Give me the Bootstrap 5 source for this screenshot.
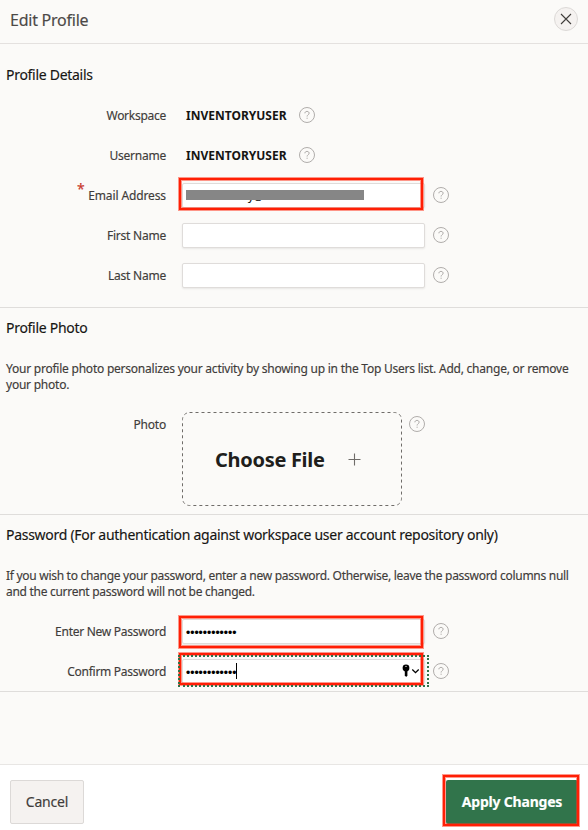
<!DOCTYPE html>
<html lang="en">
<head>
<meta charset="utf-8">
<meta name="viewport" content="width=device-width, initial-scale=1">
<title>Edit Profile</title>
<link href="https://cdn.jsdelivr.net/npm/bootstrap@5.3.0/dist/css/bootstrap.min.css" rel="stylesheet">
<style>
body{font-family:"Noto Sans","Open Sans",sans-serif;font-size:12px;line-height:16px;background:#fbfaf8;color:#3f3c3a;height:830px;overflow:hidden;-webkit-text-stroke:.15px}
.dialog-head{height:44px;padding:0 9px 5px 10px;border-bottom:1px solid #e4e1df}
.dialog-title{font-size:16px;line-height:20px;padding-top:1px;letter-spacing:-.24px;color:#4c4947;font-weight:400}
.close-btn{width:24px;height:24px;margin-right:1px;border:1px solid #dcd9d7;background:#f5f2f0;border-radius:50%;padding:0;line-height:0}
.section-box{border-bottom:1px solid #dfdddb}
.details-box{padding:11px 0 12px}
.section-title{font-size:14px;line-height:20px;color:#161513;padding:10px 6px 0;margin:0;font-weight:400;letter-spacing:-.285px}
.details-box .section-title{padding-bottom:10px}
.section-copy{padding:23px 6px 11px;margin:0;letter-spacing:-.23px;white-space:nowrap}
.section-copy.tight{letter-spacing:-.285px}
.field-row{height:40px}
.field-label{position:relative;width:166px;text-align:right;margin-right:16px;padding-top:2px;letter-spacing:-.22px}
.field-label.tight{letter-spacing:-.27px}
.field-label.loose{letter-spacing:-.12px}
.req-mark{color:#c8382a;font-size:14px;position:absolute;left:77px;top:-5px}
.field-value{font-weight:700;color:#161513;padding:2px 0 0 4px;margin-right:12px;-webkit-text-stroke:0}
.field-input{position:relative;width:243px;height:25px;margin-right:8px;background:#fff;border:1px solid #dfdcda;border-radius:2px;box-shadow:0 1px 2px rgba(0,0,0,.08);padding-left:3px;color:#000}
.callout-frame{position:absolute;border:2px solid #ff1f05;box-shadow:0 0 0 1px rgba(255,50,25,.5),inset 0 0 0 1px rgba(255,50,25,.5);pointer-events:none}
.frame-email{left:-4px;top:-6px;width:244px;height:32px}
.frame-new{left:-4px;top:-4px;width:244px;height:32px}
.frame-confirm{left:-4px;top:-7px;width:244px;height:32px}
.frame-apply{left:-3px;top:-5px;width:136px;height:51px}
.redaction{position:absolute;left:3px;top:6px;width:178px;height:10px;background:#868686}
.hidden-mail{position:absolute;left:65px;top:5px;font-size:11px;line-height:14px}
.dots{font-family:"Liberation Sans",sans-serif;font-size:12px;padding-top:4px}
.focus-dots{position:absolute;left:-5px;top:-5px;width:251px;height:32px;border:2px dotted #2f7248}
.caret{width:1px;height:16px;background:#000}
.autofill{margin-right:4px}
.drop-row{height:110px}
.drop-area{width:220px;height:94px;margin:8px 7px 0 0}
.drop-outline{position:absolute;inset:0}
.drop-label{margin-top:11px}
.drop-help{margin-top:12px}
.drop-text{font-size:20px;line-height:28px;font-weight:700;color:#201e1c;letter-spacing:-.3px;margin:2px 23px 0 33px;-webkit-text-stroke:0}
.dialog-foot{height:66px;border-top:1px solid #e8e6e4;background:#fff;padding:15px 10px 0}
.foot-btn{height:44px;font-size:14px;line-height:20px;border-radius:2px;padding:0}
.cancel-btn{width:74px;background:#f5f2f0;border:1px solid #dcd9d7;color:#3f3c3a;letter-spacing:-.2px}
.apply-btn{position:relative;width:132px;background:#31744b;color:#fff;font-weight:700;border:0;letter-spacing:-.2px}
</style>
</head>
<body class="d-flex flex-column">
<svg width="0" height="0" class="position-absolute">
  <symbol id="help" viewBox="0 0 16 16"><circle cx="8" cy="8" r="7.5" fill="none" stroke="#b0adab"/><path d="M5.9 6.3C5.9 5.2 6.7 4.4 8 4.4s2.1.8 2.1 1.9C10.1 7.7 8.1 7.8 8.1 9.5M8.1 10.7v1.1" fill="none" stroke="#aaa7a5"/></symbol>
</svg>
<header class="dialog-head d-flex align-items-center justify-content-between">
  <h1 class="dialog-title m-0">Edit Profile</h1>
  <button class="close-btn" aria-label="Close"><svg width="22" height="22" viewBox="0 0 22 22"><path d="M6 6l10 10M16 6L6 16" stroke="#403d3b" stroke-width="1.1" fill="none"/></svg></button>
</header>
<main class="flex-grow-1">
  <section class="section-box details-box">
    <h2 class="section-title">Profile Details</h2>
    <div class="field-row d-flex align-items-center">
      <div class="field-label tight">Workspace</div>
      <div class="field-value">INVENTORYUSER</div>
      <svg width="16" height="16"><use href="#help"/></svg>
    </div>
    <div class="field-row d-flex align-items-center">
      <div class="field-label">Username</div>
      <div class="field-value">INVENTORYUSER</div>
      <svg width="16" height="16"><use href="#help"/></svg>
    </div>
    <div class="field-row d-flex align-items-center">
      <div class="field-label loose"><span class="req-mark">*</span>Email Address</div>
      <div class="field-input"><span class="hidden-mail">y@</span><span class="redaction"></span><span class="callout-frame frame-email"></span></div>
      <svg width="16" height="16"><use href="#help"/></svg>
    </div>
    <div class="field-row d-flex align-items-center">
      <div class="field-label">First Name</div>
      <div class="field-input"></div>
      <svg width="16" height="16"><use href="#help"/></svg>
    </div>
    <div class="field-row d-flex align-items-center">
      <div class="field-label">Last Name</div>
      <div class="field-input"></div>
      <svg width="16" height="16"><use href="#help"/></svg>
    </div>
  </section>
  <section class="section-box">
    <h2 class="section-title">Profile Photo</h2>
    <p class="section-copy">Your profile photo personalizes your activity by showing up in the Top Users list. Add, change, or remove<br>your photo.</p>
    <div class="drop-row d-flex align-items-start">
      <div class="field-label drop-label">Photo</div>
      <div class="drop-area position-relative d-flex align-items-center">
        <svg class="drop-outline" width="220" height="94"><rect x=".5" y=".5" width="219" height="93" rx="7" fill="none" stroke="#6f6c69" stroke-dasharray="3 3"/></svg>
        <span class="drop-text">Choose File</span>
        <svg width="14" height="14" viewBox="0 0 14 14"><path d="M.5 7.5h12M6.5 1.5v12" stroke="#6f6c69" stroke-width="1.1"/></svg>
      </div>
      <svg class="drop-help" width="16" height="16"><use href="#help"/></svg>
    </div>
  </section>
  <section class="section-box">
    <h2 class="section-title">Password (For authentication against workspace user account repository only)</h2>
    <p class="section-copy tight">If you wish to change your password, enter a new password. Otherwise, leave the password columns null<br>and the current password will not be changed.</p>
    <div class="field-row d-flex align-items-center">
      <div class="field-label tight">Enter New Password</div>
      <div class="field-input d-flex align-items-center"><span class="dots">••••••••••••</span><span class="callout-frame frame-new"></span></div>
      <svg width="16" height="16"><use href="#help"/></svg>
    </div>
    <div class="field-row d-flex align-items-center">
      <div class="field-label tight">Confirm Password</div>
      <div class="field-input d-flex align-items-center">
        <span class="dots">••••••••••••</span><span class="caret"></span>
        <svg class="autofill ms-auto" width="18" height="14" viewBox="0 0 18 14"><circle cx="4" cy="4" r="3.4"/><path d="M2.8 6h2.6v5.5L4.2 13 2.8 11.6z"/><circle cx="4" cy="2.4" r=".6" fill="#fff"/><path d="M10.3 5.5l3.2 3.2 3.2-3.2" fill="none" stroke="#000" stroke-width="1.3"/></svg>
        <span class="callout-frame frame-confirm"></span><span class="focus-dots"></span>
      </div>
      <svg width="16" height="16"><use href="#help"/></svg>
    </div>
  </section>
</main>
<footer class="dialog-foot d-flex justify-content-between">
  <button class="foot-btn cancel-btn">Cancel</button>
  <button class="foot-btn apply-btn">Apply Changes<span class="callout-frame frame-apply"></span></button>
</footer>
<script src="https://cdn.jsdelivr.net/npm/bootstrap@5.3.0/dist/js/bootstrap.bundle.min.js"></script>
</body>
</html>
